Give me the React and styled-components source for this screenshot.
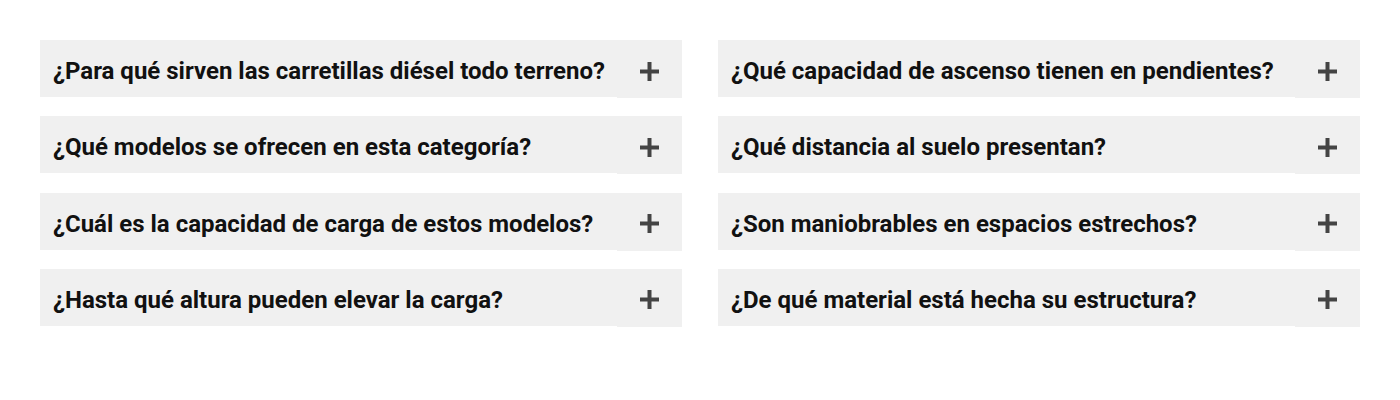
import React from 'react';
import styled, { createGlobalStyle } from 'styled-components';

const GlobalStyle = createGlobalStyle`
  body {
    margin: 0;
    background: #fff;
    font-family: Roboto, "Liberation Sans", sans-serif;
  }
`;

const FaqGrid = styled.section`
  display: grid;
  grid-template-columns: 1fr 1fr;
  column-gap: 36px;
  padding: 40px;
`;

const Column = styled.div`
  display: flex;
  flex-direction: column;
  gap: 18.33px;
`;

const Item = styled.button`
  display: flex;
  align-items: flex-start;
  width: 100%;
  height: 58px;
  padding: 0;
  border: 0;
  background: transparent;
  cursor: pointer;
  text-align: left;
`;

const Question = styled.span`
  flex: 1;
  height: 57px;
  display: flex;
  align-items: center;
  padding: 5px 0 0 13px;
  box-sizing: border-box;
  background: #f0f0f0;
  color: #111;
  font-family: Roboto, "Liberation Sans", sans-serif;
  font-size: 24px;
  font-weight: 700;
  white-space: nowrap;
`;

const Toggle = styled.span`
  width: 65px;
  height: 58px;
  display: flex;
  align-items: center;
  justify-content: center;
  padding-top: 4px;
  box-sizing: border-box;
  background: #f0f0f0;
  color: #444;
`;

const PlusIcon = () => (
  <svg width="19" height="19" viewBox="0 0 19 19">
    <rect x="7.5" y="0" width="4" height="19" fill="currentColor" />
    <rect x="0" y="7.5" width="19" height="4" fill="currentColor" />
  </svg>
);

const left = [
  '¿Para qué sirven las carretillas diésel todo terreno?',
  '¿Qué modelos se ofrecen en esta categoría?',
  '¿Cuál es la capacidad de carga de estos modelos?',
  '¿Hasta qué altura pueden elevar la carga?',
];

const right = [
  '¿Qué capacidad de ascenso tienen en pendientes?',
  '¿Qué distancia al suelo presentan?',
  '¿Son maniobrables en espacios estrechos?',
  '¿De qué material está hecha su estructura?',
];

const FaqColumn = ({ items }) => (
  <Column>
    {items.map((q) => (
      <Item key={q}>
        <Question>{q}</Question>
        <Toggle><PlusIcon /></Toggle>
      </Item>
    ))}
  </Column>
);

const App = () => {
  return (
    <>
      <GlobalStyle />
      <FaqGrid>
        <FaqColumn items={left} />
        <FaqColumn items={right} />
      </FaqGrid>
    </>
  );
};

export default App;
